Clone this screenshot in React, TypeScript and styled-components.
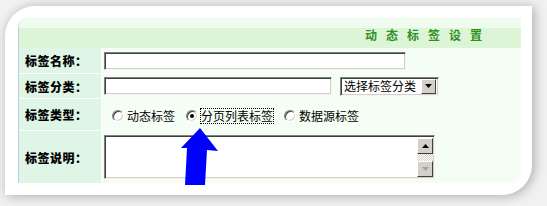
import styled, { createGlobalStyle } from "styled-components";

const GlobalStyle = createGlobalStyle`
  html, body {
    margin: 0;
    padding: 0;
    background: #f1f1f1;
  }
  * {
    box-sizing: border-box;
  }
`;

const Page = styled.div`
  position: relative;
  width: 547px;
  height: 206px;
  overflow: hidden;
  padding: 6px 0 0 5px;
  background: #f1f1f1;
  font-family: "Noto Sans CJK SC", "DejaVu Sans", sans-serif;
  font-size: 12px;
  color: #000;
`;

const Card = styled.div`
  width: 527px;
  height: 189px;
  background: #fff;
  border-radius: 30px 0 30px 0;
  box-shadow: 2px 1px 12px rgba(0, 0, 0, 0.3);
  padding: 12px 11px 12px 13px;
`;

const Panel = styled.div`
  height: 165px;
  border-left: 1px solid #b9cde9;
  border-radius: 10px 0 10px 0;
  overflow: hidden;
  background: #fafffa;
  display: flex;
  flex-direction: column;
`;

const Header = styled.div`
  height: 30px;
  flex: none;
  background: linear-gradient(#effbee 0, #effbee 34%, #dcf5d7 34%);
  display: flex;
  align-items: flex-end;
  justify-content: flex-end;
  padding: 0 30px 5px 0;
`;

const Title = styled.span`
  color: #2f8f22;
  font-weight: bold;
  font-size: 12px;
  letter-spacing: 9px;
  line-height: 16px;
`;

const Form = styled.div`
  flex: 1;
  display: grid;
  grid-template-columns: 82px 1fr;
  grid-template-rows: 25px 24px 31px 1fr;
  gap: 1px;
  background: #fbfffb;
`;

const Label = styled.div`
  background: #dff5e6;
  display: flex;
  align-items: center;
  padding-left: 6px;
  font-weight: 900;
  font-size: 12px;
  letter-spacing: 0.5px;
`;

const Cell = styled.div<{ $top?: boolean }>`
  background: #f5fef4;
  display: flex;
  align-items: ${(p) => (p.$top ? "flex-start" : "center")};
  padding: ${(p) => (p.$top ? "4px 0 0 2px" : "0 0 0 2px")};
  gap: 8px;
`;

const Sunken = styled.div<{ $w: number; $h: number }>`
  width: ${(p) => p.$w}px;
  height: ${(p) => p.$h}px;
  background: #fff;
  border-top: 1px solid #808080;
  border-left: 1px solid #808080;
  border-right: 1px solid #f4f4f4;
  border-bottom: 1px solid #f4f4f4;
  box-shadow: inset 1px 1px 0 #404040, inset -1px -1px 0 #d4d0c8;
`;

const Select = styled.div`
  width: 99px;
  height: 19px;
  background: #fff;
  border-top: 1px solid #808080;
  border-left: 1px solid #808080;
  border-right: 1px solid #f4f4f4;
  border-bottom: 1px solid #f4f4f4;
  box-shadow: inset 1px 1px 0 #404040, inset -1px -1px 0 #d4d0c8;
  display: flex;
  align-items: center;
  padding: 2px 2px 2px 3px;
  font-size: 12px;
  line-height: 14px;
  white-space: nowrap;
`;

const SelectText = styled.span`
  flex: 1;
`;

const DropButton = styled.span`
  width: 15px;
  height: 15px;
  background: #d4d0c8;
  border-top: 1px solid #fff;
  border-left: 1px solid #fff;
  border-right: 1px solid #404040;
  border-bottom: 1px solid #404040;
  display: flex;
  align-items: center;
  justify-content: center;
`;

const RadioGroup = styled.div`
  display: flex;
  align-items: center;
  padding-left: 8px;
  padding-top: 3px;
  gap: 11px;
`;

const RadioItem = styled.label`
  display: flex;
  align-items: center;
  gap: 3px;
  font-size: 12px;
  line-height: 14px;
`;

const Circle = styled.span<{ $on?: boolean }>`
  position: relative;
  width: 12px;
  height: 12px;
  border-radius: 50%;
  background: #fff;
  border: 1px solid;
  border-color: #808080 #fff #fff #808080;
  box-shadow: inset 1px 1px 0 #404040, inset -1px -1px 0 #d4d0c8;
  &::after {
    content: "";
    display: ${(p) => (p.$on ? "block" : "none")};
    position: absolute;
    left: 3px;
    top: 3px;
    width: 4px;
    height: 4px;
    border-radius: 50%;
    background: #000;
  }
`;

const Focused = styled.span`
  outline: 1px dotted #000;
  outline-offset: 0;
`;

const TextArea = styled.div`
  width: 331px;
  height: 44px;
  background: #fff;
  border-top: 1px solid #808080;
  border-left: 1px solid #808080;
  border-right: 1px solid #f4f4f4;
  border-bottom: 1px solid #f4f4f4;
  box-shadow: inset 1px 1px 0 #404040, inset -1px -1px 0 #d4d0c8;
  display: flex;
  justify-content: flex-end;
  padding: 2px 1px 1px 2px;
`;

const ScrollBar = styled.div`
  width: 16px;
  display: flex;
  flex-direction: column;
  background-color: #e8e6e0;
  background-image: repeating-conic-gradient(#d4d0c8 0 25%, #ffffff 0 50%);
  background-size: 2px 2px;
`;

const ScrollBtn = styled.div`
  height: 16px;
  background: #d4d0c8;
  border-top: 1px solid #fff;
  border-left: 1px solid #fff;
  border-right: 1px solid #404040;
  border-bottom: 1px solid #404040;
  display: flex;
  align-items: center;
  justify-content: center;
`;

const Track = styled.div`
  flex: 1;
`;

const Arrow = styled.svg`
  position: absolute;
  left: 0;
  top: 0;
  pointer-events: none;
`;

export default function App() {
  return (
    <>
      <GlobalStyle />
      <Page>
        <Card>
          <Panel>
            <Header>
              <Title>动态标签设置</Title>
            </Header>
            <Form>
              <Label>标签名称：</Label>
              <Cell>
                <Sunken $w={302} $h={18} />
              </Cell>

              <Label>标签分类：</Label>
              <Cell>
                <Sunken $w={228} $h={18} />
                <Select>
                  <SelectText>选择标签分类</SelectText>
                  <DropButton>
                    <svg width="7" height="4" viewBox="0 0 7 4">
                      <path d="M0 0h7L3.5 4z" fill="#000" />
                    </svg>
                  </DropButton>
                </Select>
              </Cell>

              <Label>标签类型：</Label>
              <Cell>
                <RadioGroup>
                  <RadioItem>
                    <Circle />
                    动态标签
                  </RadioItem>
                  <RadioItem>
                    <Circle $on />
                    <Focused>分页列表标签</Focused>
                  </RadioItem>
                  <RadioItem>
                    <Circle />
                    数据源标签
                  </RadioItem>
                </RadioGroup>
              </Cell>

              <Label>标签说明：</Label>
              <Cell $top>
                <TextArea>
                  <ScrollBar>
                    <ScrollBtn>
                      <svg width="7" height="4" viewBox="0 0 7 4">
                        <path d="M3.5 0L7 4H0z" fill="#000" />
                      </svg>
                    </ScrollBtn>
                    <Track />
                    <ScrollBtn>
                      <svg width="7" height="4" viewBox="0 0 7 4">
                        <path d="M0 0h7L3.5 4z" fill="#a0a0a0" />
                      </svg>
                    </ScrollBtn>
                  </ScrollBar>
                </TextArea>
              </Cell>
            </Form>
          </Panel>
        </Card>
        <Arrow width="547" height="206" viewBox="0 0 547 206">
          <path
            d="M200 128 L218 151 L207 150 L205 185 L185 185 L187 148 L181 148 Z"
            fill="#0000ff"
          />
        </Arrow>
      </Page>
    </>
  );
}
